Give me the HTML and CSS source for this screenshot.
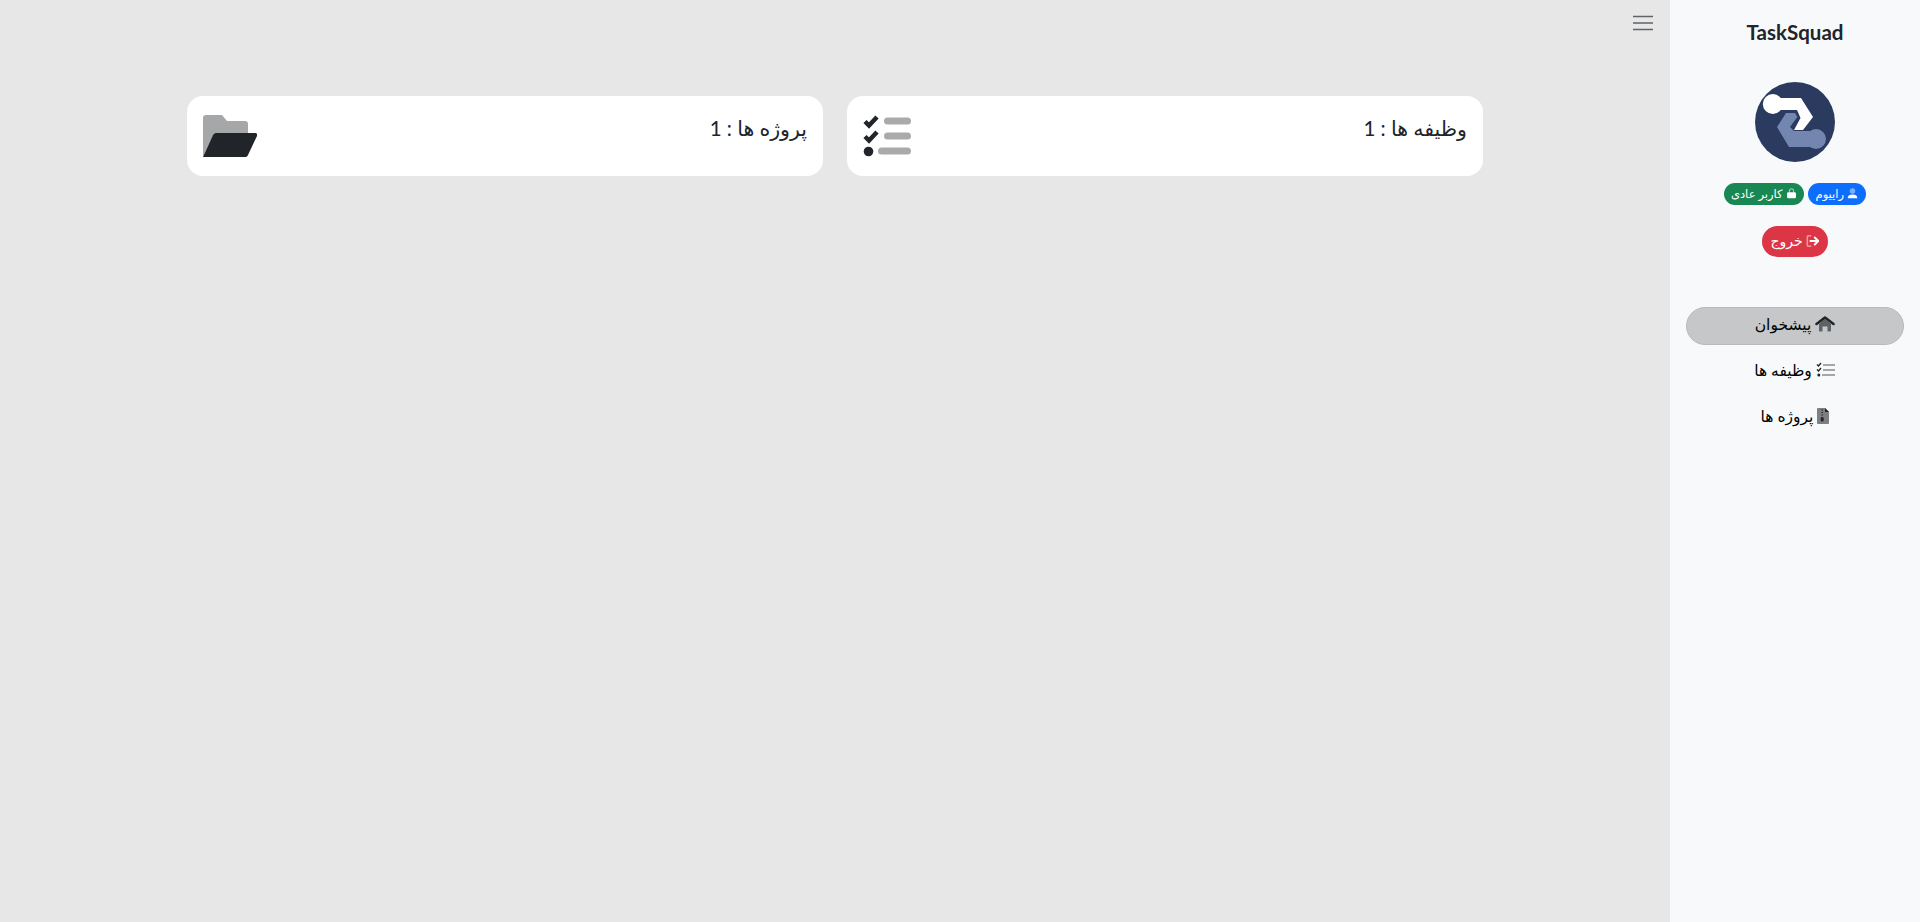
FILE: index.html
```html
<!DOCTYPE html>
<html lang="fa" dir="rtl">
<head>
  <meta charset="UTF-8">
  <meta name="viewport" content="width=device-width, initial-scale=1.0">
  <title>TaskSquad</title>
  <link rel="stylesheet" href="styles.css">
</head>
<body>
  <aside class="sidebar">
    <h1 class="brand">TaskSquad</h1>
    <svg class="logo" viewBox="0 0 80 80">
      <circle cx="40" cy="40" r="40" fill="#2a3b5f"/>
      <circle cx="61" cy="57" r="10" fill="#7386b0"/>
      <path d="M31 31H40L42.300 35L35 45L39 49H60V65H34L22 45Z" fill="#7386b0"/>
      <circle cx="17.800" cy="22" r="10" fill="#fff"/>
      <path d="M17 16H46L58 35L48 48H39L45.500 36L42 28H17Z" fill="#fff"/>
    </svg>
    <div class="badges">
      <span class="badge badge-blue">
        <svg class="badge-icon" viewBox="0 0 16 16">
          <circle cx="8" cy="4.500" r="4" fill="#fff" opacity=".45"/>
          <path d="M1 15C1 11 4 9.500 8 9.500S15 11 15 15Z" fill="#fff"/>
        </svg>
        راییوم
      </span>
      <span class="badge badge-green">
        <svg class="badge-icon" viewBox="0 0 16 16">
          <path d="M5 6V4a3 3 0 0 1 6 0V6" fill="none" stroke="#fff" stroke-opacity=".6" stroke-width="1.500"/>
          <rect x="1.500" y="6" width="13" height="9" rx="2" fill="#fff"/>
        </svg>
        کاربر عادی
      </span>
    </div>
    <a class="logout" href="#">
      <svg class="logout-icon" viewBox="0 0 16 16">
        <path d="M6 2H3a1.500 1.500 0 0 0-1.500 1.500v9A1.500 1.500 0 0 0 3 14h3" fill="none" stroke="#fff" stroke-opacity=".5" stroke-width="1.800"/>
        <path d="M5 8H14M10 4L14 8L10 12" fill="none" stroke="#fff" stroke-width="2.200" stroke-linecap="round" stroke-linejoin="round"/>
      </svg>
      خروج
    </a>
    <nav class="nav">
      <a class="nav-link active" href="#">
        <svg class="nav-icon" viewBox="0 0 20 16">
          <path d="M4 8L10 3L16 8V14.500A1 1 0 0 1 15 15.500H12.500V10.500H7.500V15.500H5A1 1 0 0 1 4 14.500Z" fill="#5f6265"/>
          <path d="M1.500 8L10 1.500L18.500 8" fill="none" stroke="#212529" stroke-width="2.600" stroke-linecap="round" stroke-linejoin="round"/>
        </svg>
        پیشخوان
      </a>
      <a class="nav-link" href="#">
        <svg class="nav-icon" viewBox="0 0 20 16">
          <path d="M1 2.500L2.500 4L5 1M1 7.500L2.500 9L5 6" fill="none" stroke="#212529" stroke-width="1.400"/>
          <circle cx="2.800" cy="13" r="1.500" fill="#212529"/>
          <path d="M7 3H19M7 8H19M6 13H19" stroke="#888b8e" stroke-width="1.500"/>
        </svg>
        وظیفه ها
      </a>
      <a class="nav-link" href="#">
        <svg class="nav-icon nav-icon-file" viewBox="0 0 12 16">
          <path d="M1 0H8L12 4V15A1 1 0 0 1 11 16H1A1 1 0 0 1 0 15V1A1 1 0 0 1 1 0Z" fill="#7d7f82"/>
          <path d="M8 0L12 4H8Z" fill="#212529"/>
          <path d="M4.500 2H6M4.500 4.500H6M4.500 7H6" stroke="#212529" stroke-width="1.200"/>
          <rect x="3.800" y="9" width="2.800" height="4.500" rx="1.200" fill="#212529"/>
        </svg>
        پروژه ها
      </a>
    </nav>
  </aside>

  <main class="main">
    <div class="topbar">
      <button class="menu-toggle" aria-label="menu">
        <svg viewBox="0 0 20 16" class="menu-icon">
          <path d="M0 1.500H20M0 8H20M0 14.500H20" stroke="#5f6468" stroke-width="1.600"/>
        </svg>
      </button>
    </div>
    <div class="stats">
      <div class="stat-card">
        <span class="stat-text">وظیفه ها : 1</span>
        <svg class="stat-icon" width="48" height="42" viewBox="0 0 48 42">
          <path d="M2 6.500L6 10.500L14 2M2 21.500L6 25.500L14 17" fill="none" stroke="#212529" stroke-width="4.500"/>
          <circle cx="5.500" cy="36.500" r="4.800" fill="#212529"/>
          <rect x="21" y="2.500" width="27" height="7" rx="3.500" fill="#a9aaab"/>
          <rect x="21" y="17.500" width="27" height="7" rx="3.500" fill="#a9aaab"/>
          <rect x="15" y="32.500" width="33" height="7" rx="3.500" fill="#a9aaab"/>
        </svg>
      </div>
      <div class="stat-card">
        <span class="stat-text">پروژه ها : 1</span>
        <svg class="stat-icon" width="54" height="42" viewBox="0 0 54 42">
          <path d="M3 0H19L24 6H42A3 3 0 0 1 45 9V18H11L0 42V3A3 3 0 0 1 3 0Z" fill="#a6a7a8"/>
          <path d="M13 18H52A2 2 0 0 1 54 21L45 40A3 3 0 0 1 43 42H0L10 20A3 3 0 0 1 13 18Z" fill="#212529"/>
        </svg>
      </div>
    </div>
  </main>
</body>
</html>
```

FILE: styles.css
```css
/* General */
html, body {
  height: 100%;
}

body {
  margin: 0;
  display: flex;
  background-color: #e7e7e7;
  color: #212529;
  font-family: 'Lato', 'DejaVu Sans', sans-serif;
  overflow: hidden;
}

/* Sidebar */
.sidebar {
  flex: 0 0 250px;
  box-sizing: border-box;
  height: 922px;
  padding: 16px;
  background-color: #f8f9fa;
  display: flex;
  flex-direction: column;
  align-items: center;
}

.brand {
  margin: 5px 0 1px;
  font-size: 20.500px;
  line-height: 22px;
  font-weight: 700;
}

.logo {
  display: block;
  width: 80px;
  height: 80px;
  margin-top: 38px;
}

.badges {
  display: flex;
  gap: 4px;
  margin-top: 21px;
}

.badge {
  display: flex;
  align-items: center;
  gap: 3px;
  height: 22px;
  padding: 0 7px 1px;
  box-sizing: border-box;
  border-radius: 11px;
  color: #fff;
  font-size: 11.500px;
  font-weight: 400;
}

.badge-blue {
  padding: 0 8px 1px;
  background-color: #0d6efd;
}

.badge-green {
  background-color: #198754;
}

.badge-icon {
  width: 11px;
  height: 11px;
}

.logout {
  display: flex;
  align-items: center;
  gap: 3px;
  height: 31px;
  box-sizing: border-box;
  margin-top: 21px;
  padding: 0 8px 2px;
  border-radius: 16px;
  background-color: #dc3545;
  color: #fff;
  font-size: 14px;
  text-decoration: none;
}

.logout-icon {
  width: 14px;
  height: 14px;
}

.nav {
  align-self: stretch;
  display: flex;
  flex-direction: column;
  gap: 8px;
  margin-top: 50px;
}

.nav-link {
  display: flex;
  align-items: center;
  justify-content: center;
  gap: 4px;
  box-sizing: border-box;
  height: 38px;
  padding-bottom: 4px;
  border: 1px solid transparent;
  border-radius: 19px;
  color: #000;
  font-size: 15.500px;
  text-decoration: none;
}

.nav-link.active {
  background-color: #c6c7c8;
  border-color: #b9babb;
}

.nav-icon {
  width: 20px;
  height: 16px;
}

.nav-icon-file {
  width: 12px;
}

/* Main area */
.main {
  flex: 1;
  min-width: 0;
}

.topbar {
  display: flex;
  height: 96px;
  padding: 15px 17px 0;
  box-sizing: border-box;
}

.menu-toggle {
  padding: 0;
  border: 0;
  background: none;
  height: 16px;
}

.menu-icon {
  display: block;
  width: 20px;
  height: 16px;
}

.stats {
  display: flex;
  gap: 24px;
  width: 1296px;
  margin: 0 auto;
}

.stat-card {
  flex: 1;
  display: flex;
  align-items: center;
  justify-content: space-between;
  box-sizing: border-box;
  height: 80px;
  padding: 0 16px;
  background: #fff;
  border-radius: 16px;
}

.stat-text {
  font-size: 20.500px;
  align-self: flex-start;
  margin-top: 20px;
}

.stat-icon {
  flex: none;
}
```
